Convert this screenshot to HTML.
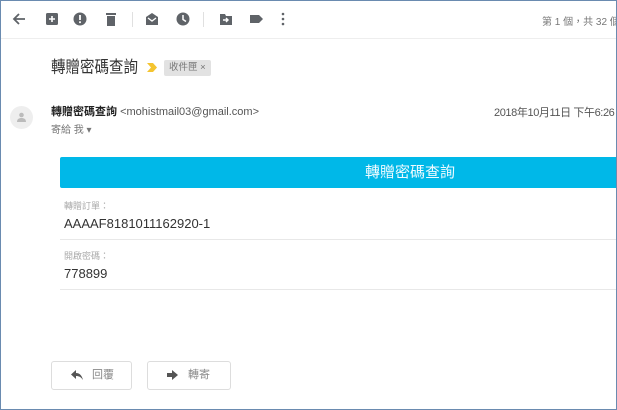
<!DOCTYPE html>
<html><head><meta charset="utf-8"><style>
*{margin:0;padding:0;box-sizing:border-box}
body{width:617px;height:410px;overflow:hidden;background:#fff;font-family:"Liberation Sans","Noto Sans CJK TC",sans-serif;position:relative;color:#222}
.frame{position:absolute;left:0;top:0;width:617px;height:410px;border:1px solid #6a8bb0;pointer-events:none;z-index:9}
.a{position:absolute}
.ic{position:absolute;top:11px;width:16px;height:16px}
</style></head><body>
<div class="frame"></div>
<svg class="ic" style="left:11px" viewBox="0 0 16 16"><path d="M14 8H3M8 3L3 8l5 5" stroke="#5f6368" stroke-width="1.8" fill="none"/></svg>
<svg class="ic" style="left:44px" viewBox="0 0 16 16"><rect x="2" y="2" width="12" height="12" rx="1.5" fill="#5f6368"/><path d="M8 5v6M5 8h6" stroke="#fff" stroke-width="1.6"/></svg>
<svg class="ic" style="left:72px" viewBox="0 0 16 16"><circle cx="8" cy="8" r="6.5" fill="#5f6368"/><rect x="7.1" y="4" width="1.8" height="5" fill="#fff"/><rect x="7.1" y="10.3" width="1.8" height="1.8" fill="#fff"/></svg>
<svg class="ic" style="left:103px" viewBox="0 0 16 16"><rect x="3" y="2" width="10" height="2" fill="#5f6368"/><rect x="4" y="5" width="8" height="10" fill="#5f6368"/></svg>
<div class="a" style="left:132px;top:12px;width:1px;height:15px;background:#e0e0e0"></div>
<svg class="ic" style="left:144px" viewBox="0 0 16 16"><path d="M2 6l6-4 6 4v8H2z" fill="#5f6368"/><path d="M4 7l4 3 4-3" stroke="#fff" stroke-width="1.3" fill="none"/></svg>
<svg class="ic" style="left:175px" viewBox="0 0 16 16"><circle cx="8" cy="8" r="6.5" fill="#5f6368"/><path d="M8 4v4.5l3 2" stroke="#fff" stroke-width="1.5" fill="none"/></svg>
<div class="a" style="left:203px;top:12px;width:1px;height:15px;background:#e0e0e0"></div>
<svg class="ic" style="left:218px" viewBox="0 0 16 16"><path d="M2 3h5l1 2h6v9H2z" fill="#5f6368"/><path d="M5 9h4M8 7l2 2-2 2" stroke="#fff" stroke-width="1.4" fill="none"/></svg>
<svg class="ic" style="left:248px" viewBox="0 0 16 16"><path d="M2 4h9l4 4-4 4H2z" fill="#5f6368"/></svg>
<svg class="ic" style="left:275px" viewBox="0 0 16 16"><circle cx="8" cy="3" r="1.3" fill="#5f6368"/><circle cx="8" cy="8" r="1.3" fill="#5f6368"/><circle cx="8" cy="13" r="1.3" fill="#5f6368"/></svg>
<div class="a" style="left:542px;top:13px;font-size:10px;color:#777;white-space:nowrap">第 1 個，共 32 個</div>
<div class="a" style="left:0;top:38px;width:617px;height:1px;background:#eee"></div>
<div class="a" style="left:51px;top:58px;font-size:14.5px;line-height:20px;color:#333;transform:scaleY(1.15);transform-origin:left center">轉贈密碼查詢</div>
<svg class="a" style="left:146px;top:62px" width="12" height="11" viewBox="0 0 12 11"><path d="M1 1h6l4 4.5-4 4.5H1l4-4.5z" fill="#f4c430"/></svg>
<div class="a" style="left:164px;top:60px;height:16px;padding:0 5px;background:#e2e2e2;border-radius:2px;font-size:9.5px;line-height:16px;color:#777">收件匣 ×</div>
<div class="a" style="left:10px;top:106px;width:23px;height:23px;border-radius:50%;background:#eee"></div>
<svg class="a" style="left:16px;top:111px" width="11" height="12" viewBox="0 0 11 12"><circle cx="5.5" cy="4" r="2.3" fill="#bbb"/><path d="M1 11c0-3 2-4 4.5-4s4.5 1 4.5 4z" fill="#bbb"/></svg>
<div class="a" style="left:51px;top:103px;font-size:11px;white-space:nowrap"><b style="color:#222">轉贈密碼查詢</b> <span style="color:#555">&lt;mohistmail03@gmail.com&gt;</span></div>
<div class="a" style="left:494px;top:104px;font-size:11px;color:#555;white-space:nowrap;letter-spacing:-0.4px">2018年10月11日 下午6:26</div>
<div class="a" style="left:51px;top:121px;font-size:10px;color:#777">寄給 我 ▾</div>
<div class="a" style="left:60px;top:157px;width:557px;height:31px;background:#00b8e8;color:#eefaff;font-size:15px;line-height:31px;padding-left:305px;border-radius:2px 0 0 2px">轉贈密碼查詢</div>
<div class="a" style="left:64px;top:199px;font-size:9px;color:#aaa">轉贈訂單：</div>
<div class="a" style="left:64px;top:216px;font-size:13px;color:#333">AAAAF8181011162920-1</div>
<div class="a" style="left:60px;top:239px;width:557px;height:1px;background:#e8e8e8"></div>
<div class="a" style="left:64px;top:249px;font-size:9px;color:#aaa">開啟密碼：</div>
<div class="a" style="left:64px;top:266px;font-size:13px;color:#333">778899</div>
<div class="a" style="left:60px;top:289px;width:557px;height:1px;background:#e8e8e8"></div>
<div class="a" style="left:51px;top:361px;width:81px;height:29px;border:1px solid #ddd;border-radius:3px;font-size:11px;color:#888;line-height:27px;padding-left:40px">回覆</div>
<svg class="a" style="left:71px;top:370px" width="12" height="10" viewBox="0 0 12 10"><path d="M5 0L0 4.5 5 9V6c3 0 5 1 7 4-1-4-3-7-7-7z" fill="#555"/></svg>
<div class="a" style="left:147px;top:361px;width:84px;height:29px;border:1px solid #ddd;border-radius:3px;font-size:11px;color:#888;line-height:27px;padding-left:40px">轉寄</div>
<svg class="a" style="left:167px;top:370px" width="11" height="10" viewBox="0 0 11 10"><path d="M0 3h5V0l6 5-6 5V7H0z" fill="#555"/></svg>
</body></html>
